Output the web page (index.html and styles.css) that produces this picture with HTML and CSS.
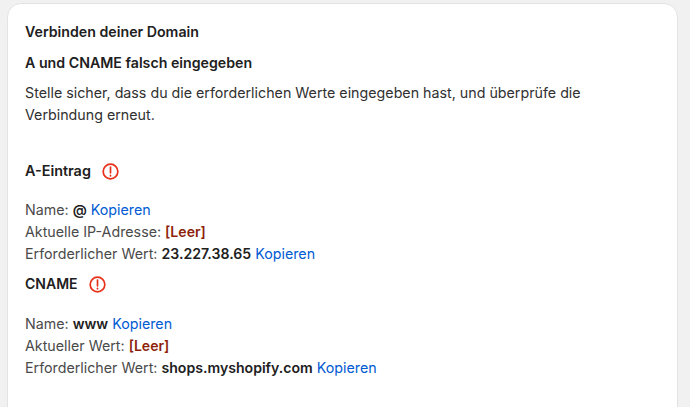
FILE: index.html
```html
<!DOCTYPE html>
<html lang="de">
<head>
    <meta charset="UTF-8">
    <meta name="viewport" content="width=device-width, initial-scale=1.0">
    <title>Verbinden deiner Domain</title>
    <link rel="stylesheet" href="styles.css">
</head>
<body>
    <div class="card">
        <h3 class="title">Verbinden deiner Domain</h3>
        <h3 class="title subtitle">A und CNAME falsch eingegeben</h3>
        <p class="intro">Stelle sicher, dass du die erforderlichen Werte eingegeben hast, und überprüfe die Verbindung erneut.</p>

        <div class="record-head first">
            <span>A-Eintrag</span>
            <svg class="warn" viewBox="0 0 16 16"><circle cx="8" cy="8" r="6.9"/><path d="M8 3.8v5.4"/><path d="M8 11.6v.5"/></svg>
        </div>
        <div class="rows">
            <div>Name: <b>@</b> <a href="#">Kopieren</a></div>
            <div>Aktuelle IP-Adresse: <b class="empty">[Leer]</b></div>
            <div>Erforderlicher Wert: <b>23.227.38.65</b> <a href="#">Kopieren</a></div>
        </div>

        <div class="record-head second">
            <span>CNAME</span>
            <svg class="warn" viewBox="0 0 16 16"><circle cx="8" cy="8" r="6.9"/><path d="M8 3.8v5.4"/><path d="M8 11.6v.5"/></svg>
        </div>
        <div class="rows lower">
            <div>Name: <b>www</b> <a href="#">Kopieren</a></div>
            <div>Aktueller Wert: <b class="empty">[Leer]</b></div>
            <div>Erforderlicher Wert: <b>shops.myshopify.com</b> <a href="#">Kopieren</a></div>
        </div>
    </div>
</body>
</html>
```

FILE: styles.css
```css
html, body {
    height: 100%;
}

body {
    margin: 0;
    padding: 3px 12px 0 7px;
    box-sizing: border-box;
    overflow: hidden;
    background: #f1f1f1;
    font-family: Inter, "Liberation Sans", sans-serif;
    font-size: 14.25px;
    line-height: 21.7px;
    color: #303030;
}

.card {
    background: #fff;
    border: 1px solid #e3e3e3;
    border-radius: 14px;
    padding: 17px 17px 40px;
    min-height: 420px;
    box-sizing: border-box;
}

.title {
    margin: 0;
    font-size: 14.2px;
    font-weight: 600;
    color: #202020;
}

.subtitle {
    margin-top: 9px;
}

.intro {
    margin: 9px 0 0;
    padding-right: 30px;
    line-height: 22px;
    color: #303030;
}

.record-head {
    display: flex;
    align-items: center;
    gap: 11px;
    font-size: 14.4px;
    font-weight: 600;
    color: #202020;
}

.record-head.first {
    margin-top: 34px;
}

.record-head.second {
    margin-top: 9px;
    font-size: 14px;
}

.warn {
    width: 17px;
    height: 17px;
    fill: none;
    stroke: #e8311a;
    stroke-width: 1.6;
    stroke-linecap: round;
}

.rows {
    margin-top: 17px;
    color: #4a4a4a;
}

.rows.lower {
    margin-top: 18px;
    line-height: 22px;
}

.rows b {
    font-size: 14.1px;
    font-weight: 600;
    color: #202020;
}

.rows b.empty {
    color: #8e1f0b;
}

.rows a {
    color: #005bd3;
    text-decoration: none;
}
```
